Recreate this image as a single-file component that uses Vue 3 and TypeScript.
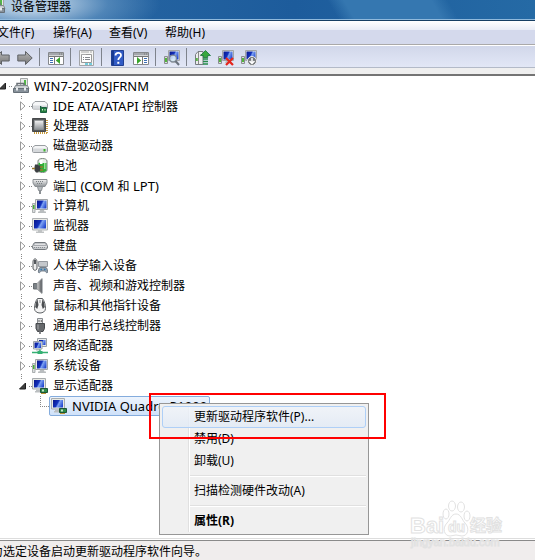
<script setup lang="ts">
import { ref } from 'vue'

interface Device {
  icon: string
  label: string
  open?: boolean
}

interface MenuEntry {
  label?: string
  hot?: boolean
  strong?: boolean
}

const menus = ['文件(F)', '操作(A)', '查看(V)', '帮助(H)']

const tools: { icon: string; title: string }[][] = [
  [
    { icon: 'back', title: '后退' },
    { icon: 'forward', title: '前进' },
  ],
  [{ icon: 'tree-pane', title: '显示/隐藏控制台树' }],
  [{ icon: 'props', title: '属性' }],
  [
    { icon: 'help', title: '帮助' },
    { icon: 'action-pane', title: '显示/隐藏操作窗格' },
  ],
  [{ icon: 'scan', title: '扫描检测硬件改动' }],
  [
    { icon: 'update', title: '更新驱动程序软件' },
    { icon: 'uninstall', title: '卸载' },
    { icon: 'disable', title: '禁用' },
  ],
]

const devices = ref<Device[]>([
  { icon: 'ide', label: 'IDE ATA/ATAPI 控制器' },
  { icon: 'cpu', label: '处理器' },
  { icon: 'disk', label: '磁盘驱动器' },
  { icon: 'battery', label: '电池' },
  { icon: 'port', label: '端口 (COM 和 LPT)' },
  { icon: 'computer', label: '计算机' },
  { icon: 'monitor', label: '监视器' },
  { icon: 'keyboard', label: '键盘' },
  { icon: 'hid', label: '人体学输入设备' },
  { icon: 'sound', label: '声音、视频和游戏控制器' },
  { icon: 'mouse', label: '鼠标和其他指针设备' },
  { icon: 'usb', label: '通用串行总线控制器' },
  { icon: 'network', label: '网络适配器' },
  { icon: 'computer', label: '系统设备' },
  { icon: 'display', label: '显示适配器', open: true },
])

const contextMenu: MenuEntry[] = [
  { label: '更新驱动程序软件(P)...', hot: true },
  { label: '禁用(D)' },
  { label: '卸载(U)' },
  {},
  { label: '扫描检测硬件改动(A)' },
  {},
  { label: '属性(R)', strong: true },
]

// Latin runs in the tree are set one size larger than the Chinese text.
function runs(label: string) {
  return (label.match(/[\x20-\x7e]+|[^\x20-\x7e]+/g) ?? []).map((text) => ({
    text,
    latin: text.charCodeAt(0) < 128,
  }))
}
</script>

<template>
  <div class="window">
    <svg class="sprite" aria-hidden="true">
      <defs>
        <linearGradient id="g-screen" x1="0" y1="0.2" x2="1" y2="0.6">
          <stop offset="0" stop-color="#0a1a90" />
          <stop offset="0.45" stop-color="#1230bd" />
          <stop offset="0.6" stop-color="#7da2f2" />
          <stop offset="1" stop-color="#2448d0" />
        </linearGradient>
        <linearGradient id="g-metal" x1="0" y1="0" x2="0" y2="1">
          <stop offset="0" stop-color="#f4f4f4" />
          <stop offset="1" stop-color="#8d9296" />
        </linearGradient>
        <linearGradient id="g-dark" x1="0" y1="0" x2="1" y2="0">
          <stop offset="0" stop-color="#d8d8d8" />
          <stop offset="1" stop-color="#4a4e52" />
        </linearGradient>
        <linearGradient id="g-arrow" x1="0" y1="0" x2="0" y2="1">
          <stop offset="0" stop-color="#b5b5b5" />
          <stop offset="1" stop-color="#777" />
        </linearGradient>

        <symbol id="i-back" viewBox="0 0 16 16">
          <path d="M.8 8 7.500 1.500V5h7.700v6H7.500v3.500z" fill="url(#g-arrow)" stroke="#5f6266" />
        </symbol>
        <symbol id="i-forward" viewBox="0 0 16 16">
          <path d="M15.200 8 8.500 1.500V5H.8v6h7.700v3.500z" fill="url(#g-arrow)" stroke="#5f6266" />
        </symbol>
        <symbol id="i-tree-pane" viewBox="0 0 16 16">
          <path d="M.5 2.500h15v12H.5z" fill="#fff" stroke="#85888c" />
          <path d="M1 3h14v2.500H1z" fill="#a5a8ad" />
          <path d="M11 4h1M13 4h1M1 6.500h14M6.500 6v8" stroke="#777" />
          <path d="M2 8.500h3M2 10.500h3M2 12.500h3" stroke="#3d6fb5" />
          <path d="M12 7v7L7.800 10.500z" fill="#38a52b" />
        </symbol>
        <symbol id="i-action-pane" viewBox="0 0 16 16">
          <path d="M.5 2.500h15v12H.5z" fill="#fff" stroke="#85888c" />
          <path d="M1 3h14v2.500H1z" fill="#a5a8ad" />
          <path d="M11 4h1M13 4h1M1 6.500h14M9.500 6v8" stroke="#777" />
          <path d="M11 8.500h3M11 10.500h3M11 12.500h3" stroke="#3d6fb5" />
          <path d="M4 7v7l4.200-3.500z" fill="#38a52b" />
        </symbol>
        <symbol id="i-props" viewBox="0 0 16 16">
          <path d="M.5.5h14v15H.5z" fill="#f6f6f4" stroke="#a2a4a7" />
          <path d="M2.500 4.500h10v8h-10z" fill="#fff" stroke="#999" />
          <path d="M3 4.500h4M2 2h8M11 2h2" stroke="#aaa" />
          <path d="M4 7.500h1M6 7.500h5M4 9.500h1M6 9.500h5" stroke="#85888d" />
          <path d="M6 14h3M10 14h3" stroke="#48bfd4" stroke-width="1.500" />
        </symbol>
        <symbol id="i-help" viewBox="0 0 16 16">
          <path d="M1.500.5h12v15h-12z" fill="#315bc5" stroke="#203f91" />
          <path d="M2 1h2v14H2z" fill="#173a91" />
          <path d="M5.500 5.500c0-3.500 5.500-3.500 5.500-.3C11 7.500 8.300 7.300 8.300 10" fill="none" stroke="#fff" stroke-width="1.800" />
          <path d="M7.300 11.800h2v2h-2z" fill="#fff" />
        </symbol>
        <symbol id="i-pc" viewBox="0 0 16 16">
          <path d="M.5 6.500h3v7h-3z" fill="#d9dcde" stroke="#8a8e91" />
          <path d="M1 8h2v4H1z" fill="#51b63b" />
          <path d="M4.500.5h11v10h-11z" fill="#e4e5e1" stroke="#a3a6a8" />
          <path d="M5.500 1.500h9v8h-9z" fill="url(#g-screen)" />
          <path d="M8 11h4l1 2H7z" fill="#b9bdc0" />
        </symbol>
        <symbol id="i-scan" viewBox="0 0 16 16">
          <use href="#i-pc" width="16" height="16" />
          <circle cx="9" cy="8.500" r="3.400" fill="#dceefa" fill-opacity=".85" stroke="#7f8a96" stroke-width="1.200" />
          <path d="m11.500 11 3.500 4" stroke="#6a737d" stroke-width="2" />
        </symbol>
        <symbol id="i-update" viewBox="0 0 16 16">
          <path d="M.5 4.500 3 1.500h5v13H.5z" fill="#eceeee" stroke="#777c80" />
          <path d="M3.500 2v12M5.500 4.500h2" stroke="#888" />
          <path d="m10.500.5 5 5h-2.800v2H8.300v-2H5.500z" fill="#38a83d" stroke="#15733a" stroke-width=".8" />
          <path d="M8 9h5M8 11.500h5M8 14h5" stroke="#258b4a" stroke-width="1.500" />
          <path d="M.8 8h2v3h-2z" fill="#5bb646" />
        </symbol>
        <symbol id="i-uninstall" viewBox="0 0 16 16">
          <use href="#i-pc" width="16" height="16" />
          <path d="m8 8 7 7M15 8l-7 7" stroke="#e3261d" stroke-width="2.200" />
        </symbol>
        <symbol id="i-disable" viewBox="0 0 16 16">
          <use href="#i-pc" width="16" height="16" />
          <circle cx="11" cy="11" r="4.500" fill="#73777b" stroke="#eee" />
          <path d="M11 8v5M8.500 11l2.500 2.500 2.500-2.500" fill="none" stroke="#fff" stroke-width="1.500" />
        </symbol>

        <symbol id="i-root" viewBox="0 0 18 16">
          <path d="M8.500.5h7v9h-7z" fill="#e8eae8" stroke="#a3a6a6" />
          <path d="M12 2h2v5h-2z" fill="#52b747" />
          <path d="M5 8V5.500h7V8" fill="none" stroke="#6b7177" stroke-width="1.500" />
          <path d="M3.500 7.500h12l1.500 3H2z" fill="#c9cdd0" stroke="#848a8f" />
          <path d="M1.500 10.500h15v4h-15z" fill="#87919a" stroke="#666f77" />
          <path d="M4 9.500h2v3H4zM12 9.500h2v3h-2z" fill="#e7eaec" />
        </symbol>
        <symbol id="i-disk" viewBox="0 0 16 16">
          <path d="M3 7.500h10l2.500 2v4c0 .6-.4 1-1 1h-13c-.6 0-1-.4-1-1v-4z" fill="#f3f4f5" stroke="#999da1" />
          <path d="M1 10.500h14V14H1z" fill="#d5d8db" />
          <path d="M11.500 11h2v2.500h-2z" fill="#3db52e" />
        </symbol>
        <symbol id="i-ide" viewBox="0 0 16 16">
          <path d="M3 3.500h10l2.500 2.500v4c0 .6-.4 1-1 1h-13c-.6 0-1-.4-1-1V6z" fill="#f6f7f8" stroke="#9a9ea2" />
          <path d="M1 7.500h14v3H1z" fill="#d8dbde" />
          <path d="M8.500 8v6.500h6v-5h-5z" fill="#247e3d" stroke="#1d6042" />
          <path d="M10 11h1v1.500h-1zM12.500 11h1v1.500h-1z" fill="#d5edda" />
        </symbol>
        <symbol id="i-cpu" viewBox="0 0 16 16">
          <path d="M2 15h13M15 2v13" stroke="#c89b3b" stroke-width="2" stroke-dasharray="1 1" />
          <path d="M.5.5h13v13H.5z" fill="#55585a" stroke="#46494b" />
          <path d="M2.500 2.500h9v9h-9z" fill="url(#g-metal)" stroke="#989c9e" stroke-width=".7" />
        </symbol>
        <symbol id="i-battery" viewBox="0 0 16 16">
          <path d="M6 3c0-1.500 2-2.500 4.500-2.500S15 1.500 15 3v9c0 1.500-2 2.500-4.500 2.500S6 13.500 6 12z" fill="#e9f0ea" stroke="#7d867f" />
          <path d="M6.500 5c3-1 5 .5 8 0v7c0 1.500-1.500 2-4 2s-4-.5-4-2z" fill="#2fae37" />
          <path d="M8 2h2.500v4H8z" fill="#fff" />
          <path d="M12 5h1.500v6H12z" fill="#93e08f" />
          <path d="M3 6.500h3.500v1h2v6h-2v1H4L2.500 12.500V9z" fill="#3c4042" />
          <path d="M0 10.500h3M8 9h3M8 12h3" stroke="#9a7a2e" stroke-width="1.300" />
        </symbol>
        <symbol id="i-port" viewBox="0 0 16 16">
          <path d="M1 1.500h14V5l-2 3.500H3L1 5z" fill="url(#g-metal)" stroke="#8b9094" />
          <path d="M4 3.500h8M5 5.500h6" stroke="#7b8084" stroke-dasharray="1 1" />
          <path d="M5.500 8.500h5l-1 4h-3z" fill="#b8bcbf" stroke="#8b9094" />
          <path d="M8 12v4" stroke="#8b9094" stroke-width="2" />
        </symbol>
        <symbol id="i-computer" viewBox="0 0 16 16">
          <path d="M.5 5.500H3v9H.5z" fill="#dadddd" stroke="#9a9fa1" stroke-width=".8" />
          <path d="M1 7h1.500v4H1z" fill="#47ae36" />
          <path d="M3.500 1.500h12v10h-12z" fill="#e9eae6" stroke="#a2a6a9" />
          <path d="M5 2.500h9.500v8H5z" fill="url(#g-screen)" />
          <path d="M8 12h4l.5 1.500h1.500V15H6v-1.500h1.500z" fill="#b9bdbf" />
        </symbol>
        <symbol id="i-monitor" viewBox="0 0 16 16">
          <path d="M.5.5h15v11.500H.5z" fill="#e8e9e4" stroke="#b0b3b4" />
          <path d="M2 2h12v8.500H2z" fill="url(#g-screen)" />
          <path d="M6 12h4v1.500h2V15H4v-1.500h2z" fill="#bfc2c3" />
        </symbol>
        <symbol id="i-keyboard" viewBox="0 0 16 16">
          <path d="M3 4.500h10c1 0 2.500 3 2.500 4.500s-1 2.500-2 2.500h-11c-1 0-2-1-2-2.500s1.500-4.500 2.500-4.500z" fill="#c3c6c9" stroke="#74797e" />
          <path d="M3.500 6.500h9M1.500 8.500h13" stroke="#fff" stroke-dasharray="1 1" />
          <path d="M2.500 7.500h11M2 9.500h12" stroke="#8a8f94" stroke-dasharray="1 1" />
        </symbol>
        <symbol id="i-hid" viewBox="0 0 16 16">
          <path d="M2.500 1C4 .3 5 2 5 4v6c0 3-4 3-4 0V4c0-1.500.5-2.500 1.500-3z" fill="#eee" stroke="#55595d" />
          <path d="M2 2h2v4H2z" fill="#55595d" />
          <path d="M6.500 3.500h9v5h-9z" fill="#d9dcdf" stroke="#94999e" />
          <path d="M7.500 5h7M7.500 7h7" stroke="#868b90" stroke-dasharray="1 1" />
          <path d="M8 9.500h6c1 0 2 3.500 1.500 5-1.500 1-2-1.500-3-1.500h-3c-1 0-1.500 2.500-3 1.500-.5-1.500.5-5 1.500-5z" fill="#92a0ae" stroke="#5f6c78" stroke-width=".8" />
          <path d="M8.500 11.500h1.500M12 11.500h1.500" stroke="#2a7ab5" stroke-width="1.500" />
        </symbol>
        <symbol id="i-sound" viewBox="0 0 16 16">
          <path d="M1.500 5.500H5v5.500H1.500z" fill="#7b8186" stroke="#676c70" />
          <path d="m5 5.500 5-5v15L5 11z" fill="url(#g-dark)" stroke="#8d9194" stroke-width=".8" />
          <path d="M10.500 1v14" stroke="#b6babd" />
        </symbol>
        <symbol id="i-mouse" viewBox="0 0 16 16">
          <path d="M5.500.5h5C12.500 3 13.500 7 13.500 10.500c0 6-11 6-11 0C2.500 7 3.500 3 5.500.5z" fill="#f4f4f4" stroke="#5d6164" />
          <path d="M5.500 1 4 4.500 3.200 9l2 2L6.500 7zM10.500 1 12 4.500l.8 4.500-2 2L9.500 7z" fill="#4b4e51" />
          <path d="M8 2v3" stroke="#8c8f92" />
        </symbol>
        <symbol id="i-usb" viewBox="0 0 16 16">
          <path d="M5.500.5h5v5h-5z" fill="#e1e3e4" stroke="#888c90" />
          <path d="M6.500 2h1v2h-1zM8.800 2h1v2h-1z" fill="#666" />
          <path d="M4 5.500h8.500v5L11 13.500H5.500L4 10.500z" fill="#66696c" stroke="#46494c" />
          <path d="M6 6.500v5" stroke="#a9acae" />
          <path d="M8 13.500V16" stroke="#85888b" stroke-width="2" />
        </symbol>
        <symbol id="i-network" viewBox="0 0 16 16">
          <path d="M5.500.5h9v8h-9z" fill="#e8ebeb" stroke="#9ba2a7" />
          <path d="M7 2h6.500v5H7z" fill="url(#g-screen)" />
          <path d="M1.500 3.500h8.500V11H1.500z" fill="#e8ebeb" stroke="#9ba2a7" />
          <path d="M2.500 4.500h6.500V10H2.500z" fill="url(#g-screen)" />
          <path d="M4 11h4v1.500H4z" fill="#b2b7ba" />
          <path d="M0 14.500h16M8 11.500v3" stroke="#35b073" stroke-width="1.500" />
          <path d="M5.500 13h5v3h-5z" fill="#35b073" />
        </symbol>
        <symbol id="i-display" viewBox="0 0 16 16">
          <path d="M.5.5h13v10.500H.5z" fill="#e7e9e5" stroke="#a8acae" />
          <path d="M2 2h10v7.500H2z" fill="url(#g-screen)" />
          <path d="M4 11.500h4V13h2v1.500H3V13h1z" fill="#bbbfc1" />
          <path d="M8.500 10.500h7v4h-7z" fill="#2d8b47" stroke="#1c5539" />
          <path d="M10 11.500h2v2h-2z" fill="#c5e2cc" />
          <path d="M9 15.500h5" stroke="#b79334" />
        </symbol>
      </defs>
    </svg>

    <header class="titlebar">
      <svg class="title-icon" viewBox="0 0 18 16" aria-hidden="true"><use href="#i-root" /></svg>
      <h1 class="title">设备管理器</h1>
    </header>

    <nav class="menubar">
      <button v-for="m in menus" :key="m" type="button" class="menu">{{ m }}</button>
    </nav>

    <div class="toolbar" role="toolbar">
      <div v-for="(group, i) in tools" :key="i" class="tool-group">
        <button v-for="t in group" :key="t.icon" type="button" class="tool" :aria-label="t.title">
          <svg class="icon" aria-hidden="true"><use :href="'#i-' + t.icon" /></svg>
        </button>
      </div>
    </div>

    <main class="pane">
      <div class="row root">
        <button type="button" class="expander" aria-label="折叠">
          <svg class="arrow" viewBox="0 0 8 10"><path d="M6.500 2v6h-6z" fill="#404040" stroke="#1e1e1e" /></svg>
        </button>
        <span class="dots"></span>
        <svg class="icon wide" viewBox="0 0 18 16" aria-hidden="true"><use href="#i-root" /></svg>
        <span class="label latin">WIN7-2020SJFRNM</span>
      </div>
      <ul class="tree">
        <li v-for="d in devices" :key="d.label">
          <div class="row">
            <button type="button" class="expander" :aria-label="d.open ? '折叠' : '展开'" @click="d.open = !d.open">
              <svg class="arrow" viewBox="0 0 8 10">
                <path v-if="d.open" d="M6.500 2v6h-6z" fill="#404040" stroke="#1e1e1e" />
                <path v-else d="M1.500.8v8.400L6 5z" fill="#fff" stroke="#999" />
              </svg>
            </button>
            <span class="dots"></span>
            <svg class="icon" aria-hidden="true"><use :href="'#i-' + d.icon" /></svg>
            <span class="label"><span v-for="(r, i) in runs(d.label)" :key="i" :class="{ latin: r.latin }">{{ r.text }}</span></span>
          </div>
          <div v-if="d.open" class="child">
            <span class="elbow"></span>
            <button type="button" class="selected">
              <svg class="icon" aria-hidden="true"><use href="#i-display" /></svg>
              <span class="latin">NVIDIA Quadro P1000</span>
            </button>
          </div>
        </li>
      </ul>
    </main>

    <footer class="status">为选定设备启动更新驱动程序软件向导。</footer>

    <div class="context" role="menu">
      <template v-for="(e, i) in contextMenu" :key="i">
        <button v-if="e.label" type="button" role="menuitem" class="item" :class="{ hot: e.hot, strong: e.strong }">
          {{ e.label }}
        </button>
        <hr v-else class="rule" />
      </template>
    </div>
    <div class="marker"></div>

    <svg class="watermark" viewBox="0 0 104 50">
      <g class="outline">
        <text x="2" y="34" class="brand">Bai</text>
        <path d="M48 15c5 0 6 6 9 9 5 5 3 13-3 13-2 0-4-1-6-1s-4 1-6 1c-6 0-8-8-3-13 3-3 4-9 9-9z" />
        <ellipse cx="38" cy="15" rx="3" ry="5" />
        <ellipse cx="44" cy="7" rx="3.500" ry="5" />
        <ellipse cx="53" cy="8" rx="3.500" ry="5" />
        <ellipse cx="59" cy="17" rx="3" ry="5" />
        <text x="40" y="33" class="du">du</text>
        <text x="62" y="32" class="cn">经验</text>
        <text x="3" y="47" class="site">jingyan.baidu.com</text>
      </g>
    </svg>
  </div>
</template>

<style>
body {
  margin: 0;
}
</style>

<style scoped>
.window {
  position: relative;
  display: flex;
  flex-direction: column;
  min-height: 100vh;
  overflow: hidden;
  background: #fff;
  color: #000;
  font: 12px/20px 'Noto Sans', 'Noto Sans CJK SC', sans-serif;
}
.window * {
  box-sizing: border-box;
}
button {
  margin: 0;
  padding: 0;
  border: 0;
  background: none;
  color: inherit;
  font: inherit;
  text-align: left;
  white-space: nowrap;
}
.sprite {
  position: absolute;
  width: 0;
  height: 0;
}
.icon {
  flex: none;
  width: 16px;
  height: 16px;
  display: block;
}
.icon.wide {
  width: 18px;
}

.titlebar {
  display: flex;
  align-items: flex-start;
  height: 21px;
  border-bottom: 1px solid #173f63;
  box-shadow: inset 0 -1px #8fb9dc;
  background:
    radial-gradient(ellipse 130px 40px at 30px 4px, rgba(190, 212, 232, 0.9) 20%, rgba(120, 165, 205, 0.5) 60%, transparent),
    linear-gradient(60deg, transparent 62%, #3577b0 65%, #3577b0 81%, transparent 84%),
    linear-gradient(90deg, #2a68a4, #1d5c9c 55%, #256aa5);
}
.title-icon {
  flex: none;
  width: 18px;
  height: 16px;
  margin: -2px 5px 0 -12px;
}
.title {
  margin: 0;
  margin-top: -3px;
  font-size: 12px;
  font-weight: 400;
  line-height: 20px;
}

.menubar {
  display: flex;
  gap: 16px;
  height: 24px;
  margin-left: -3px;
  border-bottom: 1px solid #aaa9a9;
  background: linear-gradient(#fff, #e9ecf6 9px, #d4d9ec 9px);
}
.menu {
  width: 40px;
  line-height: 23px;
}

.toolbar {
  display: flex;
  height: 23px;
  padding-top: 1px;
  margin-left: -10px;
  border-top: 1px solid #fff;
  border-bottom: 1px solid #b3bac8;
  background: linear-gradient(#d1d7ea, #e2e7f6);
}
.tool-group {
  display: flex;
}
.tool-group + .tool-group {
  padding-left: 8px;
  background: linear-gradient(#7e838c, #7e838c) 3px 1px / 1px 18px no-repeat;
}
.tool {
  width: 23px;
  padding: 2px 3px 0 4px;
}

.pane {
  flex: 1;
  border-top: 2px solid #747474;
  border-bottom: 1px solid #ddd;
  box-shadow: 0 -6px #efefef;
  margin-top: 6px;
}
.row {
  display: flex;
  align-items: center;
  height: 20px;
}
.label {
  margin-left: 5px;
  white-space: pre;
}
.latin {
  font-size: 13px;
}
.expander {
  flex: none;
  width: 10px;
  height: 14px;
  background: #fff;
}
.arrow {
  display: block;
  width: 8px;
  height: 10px;
}
.dots {
  flex: none;
  width: 3px;
  height: 1px;
  background: repeating-linear-gradient(90deg, #888 0 1px, transparent 1px 2px);
}
.row.root {
  margin-left: -1px;
}
.root .label {
  margin-left: 4px;
}
.tree {
  margin: 0;
  padding: 0;
  list-style: none;
}
.tree .row {
  padding-left: 19px;
  background: repeating-linear-gradient(#888 0 1px, transparent 1px 2px) 21px 0 / 1px 20px no-repeat;
}
.tree li:last-child .row {
  background-size: 1px 10px;
}
.child {
  display: flex;
  height: 20px;
  padding-left: 40px;
}
.elbow {
  width: 9px;
  height: 11px;
  background:
    repeating-linear-gradient(#888 0 1px, transparent 1px 2px) 0 0 / 1px 11px no-repeat,
    repeating-linear-gradient(90deg, #888 0 1px, transparent 1px 2px) 0 10px / 9px 1px no-repeat;
}
.selected {
  display: flex;
  align-items: center;
  gap: 5px;
  height: 20px;
  padding: 0 2px 0 1px;
  border: 1px solid #84acdd;
  border-radius: 2px;
  background: linear-gradient(#edf4fd, #cfe1f9);
}

.status {
  height: 20px;
  margin-top: 1px;
  border-top: 1px solid #8a8a8a;
  background: #f0eded;
  text-indent: -9px;
  line-height: 22px;
  white-space: nowrap;
}

.context {
  position: absolute;
  left: 159px;
  top: 403px;
  width: 210px;
  padding: 2px;
  border: 1px solid #979797;
  background:
    linear-gradient(90deg, #e0e0e0 1px, #fff 1px) 28px 2px / 2px calc(100% - 4px) no-repeat,
    #f0f0f0;
}
.item {
  display: block;
  width: 100%;
  height: 22px;
  padding-left: 31px;
  border: 1px solid transparent;
  border-radius: 3px;
  line-height: 20px;
}
.item.hot {
  border-color: #aecff7;
  background: linear-gradient(rgba(240, 244, 250, 0.8), rgba(225, 234, 246, 0.8));
}
.item.strong {
  font-weight: 700;
}
.rule {
  height: 2px;
  margin: 3px 0 3px 28px;
  border: 0;
  border-top: 1px solid #e0e0e0;
  background: #fff;
}
.marker {
  position: absolute;
  left: 149px;
  top: 393px;
  width: 237px;
  height: 46px;
  border: 2px solid #f00;
  pointer-events: none;
}

.watermark {
  position: absolute;
  right: 23px;
  bottom: 11px;
  width: 104px;
  height: 50px;
  pointer-events: none;
}
.outline {
  fill: #fff;
  stroke: #e2e2e2;
  stroke-width: 1px;
}
.brand {
  font: 700 22px 'Liberation Sans', sans-serif;
}
.du {
  font: 700 14px 'Liberation Sans', sans-serif;
}
.cn {
  font: 700 16px 'Noto Sans CJK SC', sans-serif;
}
.site {
  font: 11px 'Liberation Sans', sans-serif;
}
</style>
